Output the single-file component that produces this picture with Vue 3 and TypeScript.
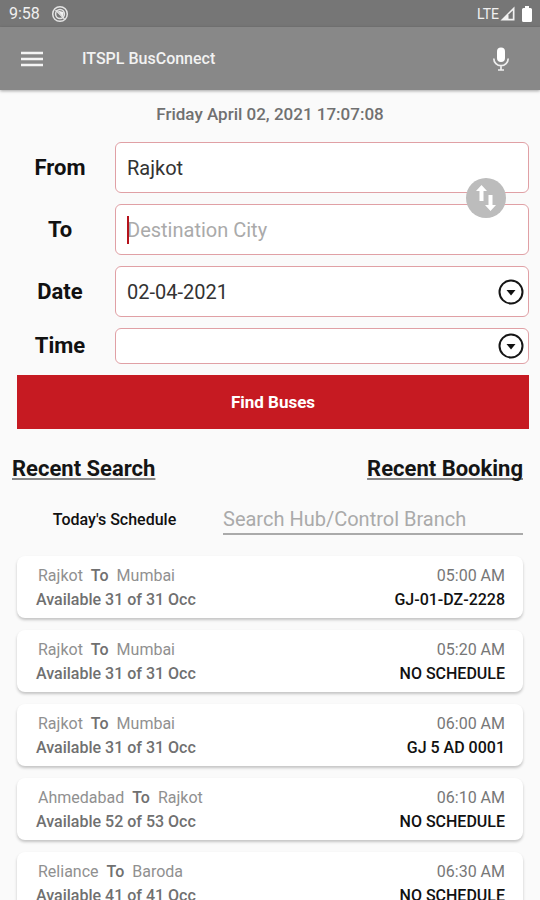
<script setup lang="ts">
import { ref } from 'vue'

interface Trip {
  from: string
  to: string
  available: number
  total: number
  time: string
  vehicle: string
}

const origin = ref('Rajkot')
const destination = ref('')
const travelDate = ref('02-04-2021')
const travelTime = ref('')
const branch = ref('')

const trips: Trip[] = [
  { from: 'Rajkot', to: 'Mumbai', available: 31, total: 31, time: '05:00 AM', vehicle: 'GJ-01-DZ-2228' },
  { from: 'Rajkot', to: 'Mumbai', available: 31, total: 31, time: '05:20 AM', vehicle: 'NO SCHEDULE' },
  { from: 'Rajkot', to: 'Mumbai', available: 31, total: 31, time: '06:00 AM', vehicle: 'GJ 5 AD 0001' },
  { from: 'Ahmedabad', to: 'Rajkot', available: 52, total: 53, time: '06:10 AM', vehicle: 'NO SCHEDULE' },
  { from: 'Reliance', to: 'Baroda', available: 41, total: 41, time: '06:30 AM', vehicle: 'NO SCHEDULE' },
]

function swapCities() {
  const previous = origin.value
  origin.value = destination.value
  destination.value = previous
}
</script>

<template>
  <div class="app">
    <div class="status">
      <span>9:58</span>
      <svg class="status-badge" width="18" height="18" viewBox="0 0 18 18">
        <circle cx="9" cy="9" r="7.3" fill="none" stroke="#e4e4e4" stroke-width="1.5" />
        <circle cx="9" cy="9" r="4.4" fill="none" stroke="#e4e4e4" stroke-width="1.5" />
        <path d="M6.5 5.4 12.6 7 12 12Z" fill="#f0f0f0" />
        <path d="m4.5 5 9 9" stroke="#e4e4e4" stroke-width="1.3" />
      </svg>
      <span class="network">LTE</span>
      <svg width="15" height="15" viewBox="0 0 15 15">
        <path d="M0.500 14.500 14.500 0.500v14Z" fill="#f2f2f2" />
        <path d="M8.500 8.500 12.800 4.500v8.300H8.500Z" fill="#777" />
      </svg>
      <svg class="battery" width="10" height="16" viewBox="0 0 10 16">
        <path d="M3 0h4v2h1.500Q10 2 10 3.500v11Q10 16 8.500 16h-7Q0 16 0 14.500v-11Q0 2 1.500 2H3Z" fill="#fff" />
      </svg>
    </div>

    <header class="bar">
      <button class="icon-button" type="button" aria-label="Menu">
        <svg width="22" height="16" viewBox="0 0 22 16">
          <path d="M0 2h22M0 8h22M0 14h22" stroke="#f4f4f4" stroke-width="2.500" />
        </svg>
      </button>
      <h1>ITSPL BusConnect</h1>
      <button class="icon-button" type="button" aria-label="Voice search">
        <svg width="18" height="24" viewBox="0 0 18 24">
          <rect x="5" y="0.500" width="8" height="14.500" rx="4" fill="#fff" />
          <path d="M1.800 11.500a7.200 7.200 0 0 0 14.400 0M9 18.700V23M6 23h6" fill="none" stroke="#eee" stroke-width="1.700" />
        </svg>
      </button>
    </header>

    <main>
      <p class="clock">Friday April 02, 2021 17:07:08</p>

      <form @submit.prevent>
        <div class="row">
          <label for="from">From</label>
          <div class="field"><input id="from" v-model="origin" type="text" /></div>
        </div>
        <div class="row">
          <label for="to">To</label>
          <div class="field">
            <input id="to" v-model="destination" type="text" placeholder="Destination City" />
            <span class="caret"></span>
            <button class="swap" type="button" aria-label="Swap cities" @click="swapCities">
              <svg width="40" height="40" viewBox="0 0 40 40">
                <circle cx="20" cy="20" r="20" fill="#bcbcbc" />
                <path d="M15.500 7 21 13H17.500V23H13.500V13H10ZM24.500 33 19 27H22.500V17H26.500V27H30Z" fill="#fff" />
              </svg>
            </button>
          </div>
        </div>
        <div class="row">
          <label for="date">Date</label>
          <div class="field">
            <select id="date" v-model="travelDate"><option>02-04-2021</option></select>
            <svg class="drop" width="26" height="26" viewBox="0 0 26 26">
              <circle cx="13" cy="13" r="11.500" fill="none" stroke="#151515" stroke-width="2" />
              <path d="M8.500 11h9l-4.500 5.500Z" fill="#111" />
            </svg>
          </div>
        </div>
        <div class="row">
          <label for="time">Time</label>
          <div class="field short">
            <select id="time" v-model="travelTime"><option value=""></option></select>
            <svg class="drop" width="26" height="26" viewBox="0 0 26 26">
              <circle cx="13" cy="13" r="11.500" fill="none" stroke="#151515" stroke-width="2" />
              <path d="M8.500 11h9l-4.500 5.500Z" fill="#111" />
            </svg>
          </div>
        </div>
        <button class="find" type="submit">Find Buses</button>
      </form>

      <nav class="recent">
        <a href="#search">Recent Search</a>
        <a href="#booking">Recent Booking</a>
      </nav>

      <div class="schedule">
        <label for="branch">Today's Schedule</label>
        <input id="branch" v-model="branch" type="text" placeholder="Search Hub/Control Branch" />
      </div>

      <ul class="trips">
        <li v-for="trip in trips" :key="trip.time" class="trip">
          <div>
            <p class="route">
              <span>{{ trip.from }}</span><b>To</b><span>{{ trip.to }}</span>
            </p>
            <p class="seats">Available {{ trip.available }} of {{ trip.total }} Occ</p>
          </div>
          <div class="right">
            <p class="time">{{ trip.time }}</p>
            <p class="vehicle">{{ trip.vehicle }}</p>
          </div>
        </li>
      </ul>
    </main>
  </div>
</template>

<style>
body {
  margin: 0;
  background: #fafafa;
}
</style>

<style scoped>
.app {
  display: flex;
  flex-direction: column;
  height: 100vh;
  overflow: hidden;
  background: #fafafa;
  color: #111;
  font-family: Roboto, "Liberation Sans", sans-serif;
}
h1, p, ul {
  margin: 0;
  padding: 0;
}
button {
  padding: 0;
  border: 0;
  background: none;
  cursor: pointer;
}
svg {
  display: block;
}
.status {
  display: flex;
  align-items: center;
  flex: none;
  height: 27px;
  padding: 0 8px 0 9px;
  background: #767676;
  color: #f0f0f0;
  font-size: 16px;
  font-weight: 400;
}
.status-badge {
  margin-left: 11px;
}
.network {
  margin-left: auto;
  margin-right: 1px;
  font-size: 14px;
}
.battery {
  margin-left: 7px;
}
.bar {
  position: relative;
  display: flex;
  align-items: center;
  flex: none;
  height: 63px;
  padding: 0 30px 0 21px;
  background: #888;
  box-shadow: 0 1px 3px rgba(0, 0, 0, 0.35);
}
.bar h1 {
  flex: 1;
  margin-left: 39px;
  color: #f2f2f2;
  font-size: 16px;
  font-weight: 500;
}
main {
  flex: 1;
  min-height: 0;
  overflow-y: auto;
  scrollbar-width: none;
}
.clock {
  padding-top: 12px;
  line-height: 24px;
  color: #707070;
  font-size: 17px;
  font-weight: 500;
  text-align: center;
}
form {
  display: flex;
  flex-direction: column;
  gap: 11px;
  padding: 16px 11px 0 17px;
}
.row {
  display: grid;
  grid-template-columns: 86px 1fr;
  column-gap: 12px;
  align-items: center;
}
.row label {
  font-size: 22px;
  font-weight: 700;
  line-height: 28px;
  text-align: center;
}
.field {
  position: relative;
  display: flex;
  box-sizing: border-box;
  height: 51px;
  border: 1px solid #e0a0a5;
  border-radius: 6px;
  background: #fff;
}
.field.short {
  height: 36px;
}
input, select {
  box-sizing: border-box;
  min-width: 0;
  margin: 0;
  border: 0;
  outline: 0;
  border-radius: 0;
  appearance: none;
  background: transparent;
  color: #333;
  font-family: inherit;
  font-size: 20px;
}
.field input, .field select {
  width: 100%;
  padding: 1px 11px 0;
}
input::placeholder {
  color: #aaa;
  opacity: 1;
}
.caret {
  position: absolute;
  top: 11px;
  left: 11px;
  width: 2px;
  height: 28px;
  background: #b5121b;
}
.swap {
  position: absolute;
  top: -27px;
  right: 22px;
  border-radius: 50%;
}
.drop {
  position: absolute;
  top: 50%;
  right: 4px;
  transform: translateY(-50%);
  pointer-events: none;
}
.find {
  height: 54px;
  background: #c61a22;
  color: #fff;
  font-family: inherit;
  font-size: 17px;
  font-weight: 700;
}
.recent {
  display: flex;
  justify-content: space-between;
  padding: 26px 17px 0 12px;
}
.recent a {
  color: #151515;
  font-size: 22px;
  font-weight: 700;
  line-height: 28px;
  text-decoration: underline;
  text-decoration-color: #888;
  text-decoration-thickness: 2px;
  text-underline-offset: 2px;
  text-decoration-skip-ink: none;
}
.schedule {
  display: grid;
  grid-template-columns: 195px 1fr;
  column-gap: 11px;
  align-items: center;
  padding: 21px 17px 0;
}
.schedule label {
  font-size: 16px;
  font-weight: 500;
  text-align: center;
}
.schedule input {
  width: 100%;
  height: 31px;
  padding: 0;
  border-bottom: 2px solid #aaa;
}
.trips {
  display: flex;
  flex-direction: column;
  gap: 12px;
  padding: 21px 17px 12px;
  list-style: none;
}
.trip {
  display: flex;
  justify-content: space-between;
  padding: 8px 18px 6px 19px;
  border-radius: 8px;
  background: #fff;
  box-shadow: 0 2px 3px rgba(0, 0, 0, 0.22);
  font-size: 16px;
  line-height: 24px;
}
.route {
  display: flex;
  gap: 8px;
  padding-left: 2px;
  color: #909090;
}
.route b {
  color: #707070;
  font-weight: 500;
}
.seats {
  color: #707070;
  font-weight: 500;
}
.right {
  text-align: right;
}
.time {
  color: #777;
}
.vehicle {
  color: #111;
  font-weight: 500;
}
</style>
